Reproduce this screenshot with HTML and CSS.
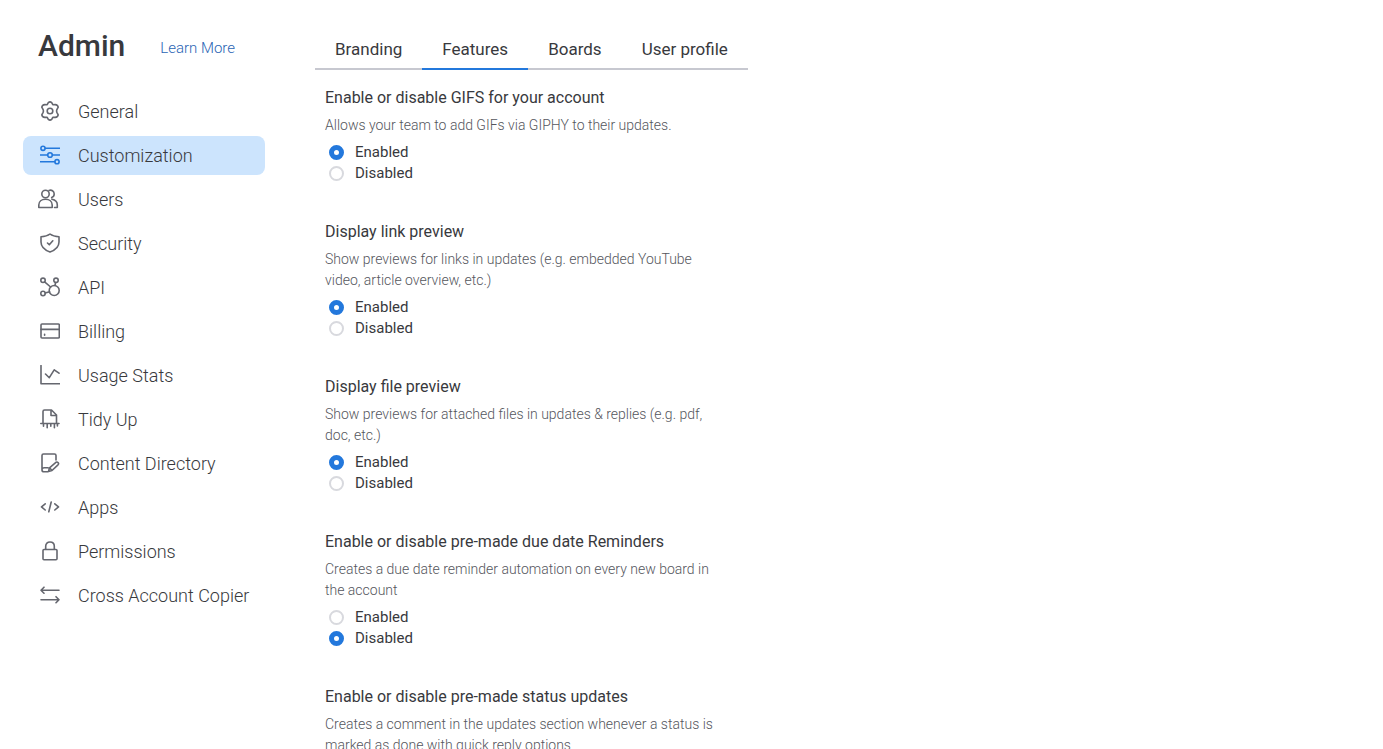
FILE: index.html
```html
<!DOCTYPE html>
<html lang="en">
<head>
    <meta charset="UTF-8">
    <meta name="viewport" content="width=device-width, initial-scale=1.0">
    <title>Admin</title>
    <link rel="stylesheet" href="styles.css">
</head>
<body>
    <div class="layout">
        <aside class="sidebar">
            <div class="sidebar-header">
                <h1>Admin</h1>
                <a href="#">Learn More</a>
            </div>
            <nav class="menu">
                <a href="#">
                    <svg class="icon" viewBox="0 0 20 20"><path d="M8.3 1.6Q10 .2 11.7 1.6L12.8 3.7L15.2 3.6Q17.8 3.8 18.2 6.2L17 8.4Q16.2 10 17 11.6L18.2 13.8Q17.8 16.2 15.2 16.4L12.8 16.3L11.7 18.4Q10 19.8 8.3 18.4L7.2 16.3L4.8 16.4Q2.2 16.2 1.8 13.8L3 11.6Q3.8 10 3 8.4L1.8 6.2Q2.2 3.8 4.8 3.6L7.2 3.7Z"/><circle cx="10" cy="10" r="2.8"/></svg>
                    General
                </a>
                <a href="#" class="active">
                    <svg class="icon" viewBox="0 0 20 20"><circle cx="3" cy="3.3" r="2.1"/><path d="M5.2 3.3H19.5M.5 10H7.5M12.5 10H19.5M.5 16.7H14.8"/><circle cx="10" cy="10" r="2.3"/><circle cx="17" cy="16.7" r="2.1"/></svg>
                    Customization
                </a>
                <a href="#">
                    <svg class="icon icon-users" viewBox="0 0 20 20"><circle cx="7.5" cy="5" r="3.7"/><path d="M.8 18.5V16C.8 12.5 3.6 10.3 7.5 10.3S14.2 12.5 14.2 16V18.5ZM11 1.5C13.4.4 16.2 2.2 16.2 5C16.2 6.7 15.2 8 13.7 8.6M14 10.3C17.2 10.9 19.3 13 19.3 16V18.5H16.5"/></svg>
                    Users
                </a>
                <a href="#">
                    <svg class="icon" viewBox="0 0 20 20"><path d="M10 1C12.5 3 15.5 3.6 19 3.7V9C19 14 15.5 17 10 19C4.5 17 1 14 1 9V3.7C4.5 3.6 7.5 3 10 1ZM7.5 10L9.3 11.8L12.8 7.8"/></svg>
                    Security
                </a>
                <a href="#">
                    <svg class="icon" viewBox="0 0 20 20"><circle cx="3" cy="3.3" r="2.2"/><circle cx="16" cy="3.3" r="2.2"/><circle cx="3" cy="16.5" r="2.2"/><circle cx="14.2" cy="13.5" r="5"/><path d="M4.6 4.9L10.6 10M15.6 5.5L15 8.5M5.2 16.1L9.6 14.7"/></svg>
                    API
                </a>
                <a href="#">
                    <svg class="icon" viewBox="0 0 20 20"><rect x="1" y="3" width="18.3" height="14" rx="1"/><path d="M1 8.4H19.3M4.6 13.2V14.3"/></svg>
                    Billing
                </a>
                <a href="#">
                    <svg class="icon" viewBox="0 0 20 20"><path d="M1 .5V18.8H19.5M5.5 9L9.3 12.7L14.2 4.8L19 8.2"/></svg>
                    Usage Stats
                </a>
                <a href="#">
                    <svg class="icon" viewBox="0 0 20 20"><path d="M3 14V2.5Q3 1 4.5 1H11.5L16.5 6V14M11 1.2V6.5H16.5M.8 14.5H19M3.5 14.5V17.3M7.2 14.5V18.8M10.8 14.5V17.3M14.4 14.5V18.8M17.4 14.5V17"/></svg>
                    Tidy Up
                </a>
                <a href="#">
                    <svg class="icon" viewBox="0 0 20 20"><path d="M16 7V2.5Q16 1 14.5 1H3.5Q2 1 2 2.5V17Q2 18.8 4 18.8H8M2.2 16Q2.6 14.7 4 14.7H8M8.5 18.5L9.5 14.8L16.2 9.2Q17.2 8.7 18.2 9.8Q19 10.8 18 11.8L12 17.5ZM9.5 14.8L12 17.5"/></svg>
                    Content Directory
                </a>
                <a href="#">
                    <svg class="icon" viewBox="0 0 20 20"><path d="M5.2 6.8L1.5 9.9L5.2 13M14.8 6.8L18.5 9.9L14.8 13M11.2 5L8.8 14.8"/></svg>
                    Apps
                </a>
                <a href="#">
                    <svg class="icon" viewBox="0 0 20 20"><rect x="3" y="8.5" width="14" height="10.3" rx="1"/><path d="M5.7 8.3V5.3C5.7 2.7 7.5 1 10 1S14.3 2.7 14.3 5.3V8.3"/></svg>
                    Permissions
                </a>
                <a href="#">
                    <svg class="icon" viewBox="0 0 20 20"><path d="M19 5.2H1M4 2.2L1 5.2L4 8.2M1 14.7H19M16 11.7L19 14.7L16 17.7"/></svg>
                    Cross Account Copier
                </a>
            </nav>
        </aside>

        <main class="content">
            <nav class="tabs">
                <a href="#">Branding</a>
                <a href="#" class="active">Features</a>
                <a href="#">Boards</a>
                <a href="#">User profile</a>
            </nav>

            <form class="settings">
                <section class="setting">
                    <h2>Enable or disable GIFS for your account</h2>
                    <p>Allows your team to add GIFs via GIPHY to their updates.</p>
                    <label><input type="radio" name="gifs" checked>Enabled</label>
                    <label><input type="radio" name="gifs">Disabled</label>
                </section>
                <section class="setting">
                    <h2>Display link preview</h2>
                    <p>Show previews for links in updates (e.g. embedded YouTube video, article overview, etc.)</p>
                    <label><input type="radio" name="links" checked>Enabled</label>
                    <label><input type="radio" name="links">Disabled</label>
                </section>
                <section class="setting">
                    <h2>Display file preview</h2>
                    <p>Show previews for attached files in updates &amp; replies (e.g. pdf, doc, etc.)</p>
                    <label><input type="radio" name="files" checked>Enabled</label>
                    <label><input type="radio" name="files">Disabled</label>
                </section>
                <section class="setting">
                    <h2>Enable or disable pre-made due date Reminders</h2>
                    <p>Creates a due date reminder automation on every new board in the account</p>
                    <label><input type="radio" name="reminders">Enabled</label>
                    <label><input type="radio" name="reminders" checked>Disabled</label>
                </section>
                <section class="setting">
                    <h2>Enable or disable pre-made status updates</h2>
                    <p>Creates a comment in the updates section whenever a status is marked as done with quick reply options</p>
                </section>
            </form>
        </main>
    </div>
</body>
</html>
```

FILE: styles.css
```css
* {
    box-sizing: border-box;
}
body {
    margin: 0;
    font-family: Roboto, Arial, sans-serif;
    background-color: #fff;
    color: #38393d;
}
h1, h2, p {
    margin: 0;
}
a {
    color: inherit;
    text-decoration: none;
}
.layout {
    display: flex;
    gap: 50px;
    height: 100vh;
    padding-left: 23px;
    overflow: hidden;
}

/* Sidebar */
.sidebar {
    flex: none;
    width: 242px;
    padding-top: 28px;
}
.sidebar-header {
    display: flex;
    align-items: center;
    gap: 35px;
    padding-left: 15px;
    margin-bottom: 28px;
}
.sidebar-header h1 {
    font-size: 30px;
    font-weight: 500;
    line-height: 36px;
}
.sidebar-header a {
    padding-top: 4px;
    font-size: 15px;
    font-weight: 300;
    color: #2a65b4;
}
.menu {
    display: flex;
    flex-direction: column;
    gap: 5px;
}
.menu a {
    display: flex;
    align-items: center;
    gap: 18px;
    height: 39px;
    padding: 0 0 1px 17px;
    border-radius: 8px;
    font-size: 18px;
    font-weight: 300;
    white-space: nowrap;
}
.menu a.active {
    background-color: #cce4fd;
}
.icon {
    flex: none;
    width: 20px;
    height: 20px;
    fill: none;
    stroke: #65676f;
    stroke-width: 1.6;
    stroke-linecap: round;
    stroke-linejoin: round;
}
.icon-users {
    width: 22px;
    margin-left: -3px;
    margin-right: 1px;
}
.menu a.active .icon {
    stroke: #2378dc;
}

/* Content */
.content {
    flex: 1;
    padding-top: 30px;
}
.tabs {
    display: flex;
    width: fit-content;
    border-bottom: 2px solid #c7c8d0;
}
.tabs a {
    padding: 8px 20px;
    margin-bottom: -2px;
    border-bottom: 2px solid transparent;
    font-size: 17px;
    line-height: 22px;
}
.tabs a.active {
    border-bottom-color: #2378dc;
}
.settings {
    max-width: 410px;
    padding: 17px 10px 0;
}
.setting {
    padding-bottom: 37px;
    line-height: 21px;
}
.setting h2 {
    margin-bottom: 7px;
    font-size: 16px;
    font-weight: 400;
}
.setting p {
    margin-bottom: 6px;
    font-size: 14px;
    font-weight: 300;
    color: #55565d;
}
.setting label {
    display: flex;
    align-items: center;
    gap: 11px;
    width: fit-content;
    padding-left: 4px;
    font-size: 15px;
}
.setting input {
    appearance: none;
    width: 15px;
    height: 15px;
    margin: 0;
    border: 2px solid #d8d9de;
    border-radius: 50%;
}
.setting input:checked {
    border: 5px solid #2378dc;
}
```
